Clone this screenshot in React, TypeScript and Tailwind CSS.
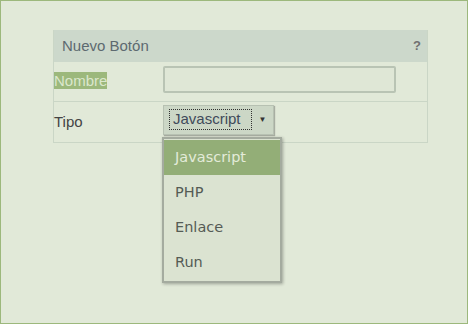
import React from "react";

export default function App() {
  const items = ["Javascript", "PHP", "Enlace", "Run"];
  return (
    <div className="w-[468px] h-[324px] bg-[#e1e9d8] border border-[#9cb87c] pt-[29px] pl-[52px] box-border" style={{ fontFamily: '"Liberation Sans", Arial, sans-serif' }}>
      <div className="w-[375px] border-x border-b border-[#cad6c6] relative">
        <div className="h-[32px] bg-[#ccd8cb] flex items-center justify-between pl-[8px] pr-[6px] text-[15px] text-[#5d6a70]">
          <span>Nuevo Botón</span>
          <span className="font-bold text-[#707070] text-[13px]">?</span>
        </div>
        <div className="h-[40px] flex items-center border-b border-[#cad6c6]">
          <div className="w-[109px] text-[15px]">
            <span className="bg-[#9cb87c] text-[#dbe7cc] leading-[17px] inline-block">Nombre</span>
          </div>
          <div className="w-[233px] h-[27px] border-2 border-[#b9c4b4] rounded-[2px] bg-[#dfe7d6] mt-[-5px]" />
        </div>
        <div className="h-[40px] flex items-center">
          <div className="w-[109px] text-[15px] text-[#444]">Tipo</div>
          <div className="w-[111px] h-[30px] bg-[#ccd7c6] border border-[#b7c1b2] shadow-[1px_1px_1px_rgba(0,0,0,0.25)] flex items-center pl-[5px] mt-[-5px]">
            <div className="border border-dotted border-[#333] h-[21px] px-[3px] flex items-center text-[15px] text-[#3f4a5a] w-[83px]">Javascript</div>
            <div className="flex-1 flex justify-center text-[8px] text-[#333]">▼</div>
          </div>
        </div>
        <div className="absolute left-[108px] top-[107px] w-[120px] bg-[#dbe3d1] border-2 border-[#a4ab9f] shadow-[1px_1px_3px_rgba(0,0,0,0.3)] py-[1px]" style={{ fontFamily: '"DejaVu Sans", "Open Sans", sans-serif' }}>
          {items.map((it, i) => (
            <div key={it} className={`h-[35px] flex items-center pl-[11px] text-[14.5px] ${i === 0 ? "bg-[#93ae77] text-[#e3ebd9]" : "text-[#555b55]"}`}>
              {it}
            </div>
          ))}
        </div>
      </div>
    </div>
  );
}
